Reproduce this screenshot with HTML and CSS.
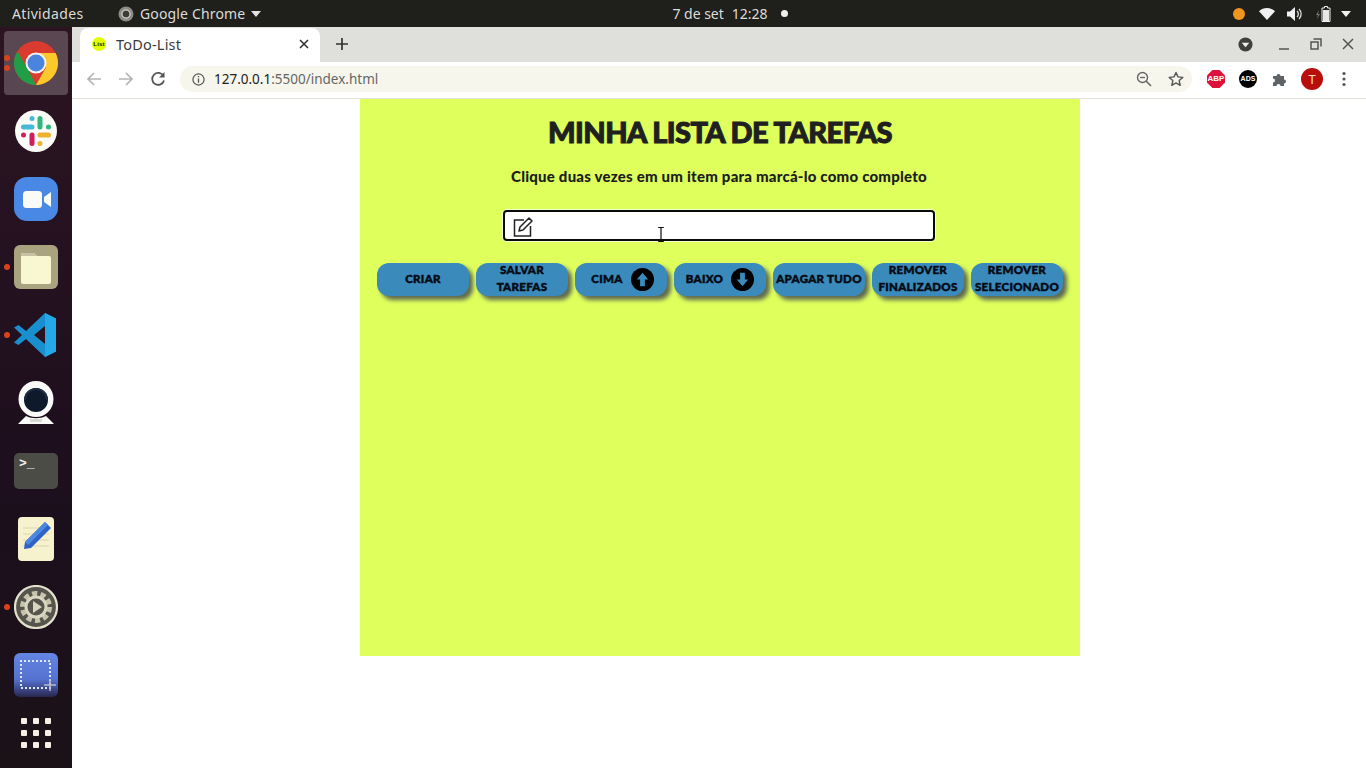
FILE: index.html
```html
<!DOCTYPE html>
<html lang="pt-BR">
<head>
<meta charset="utf-8">
<title>ToDo-List</title>
<link rel="stylesheet" href="styles.css">
</head>
<body>
<header class="topbar">
  <div class="top-left">
    <span class="top-activities">Atividades</span>
    <span class="top-app">
      <svg class="top-app-icon" viewBox="0 0 16 16"><circle cx="8" cy="8" r="7.5" fill="#8c8c86"/><circle cx="8" cy="8" r="3.2" fill="#3b3b39"/><circle cx="8" cy="8" r="4.2" fill="none" stroke="#d8d8d2" stroke-width="1"/></svg>
      Google Chrome
      <svg class="caret" viewBox="0 0 10 6"><path d="M0 0h10L5 6z" fill="#e2e2e2"/></svg>
    </span>
  </div>
  <div class="top-center">
    <span>7 de set</span><span>12:28</span><i class="clock-dot"></i>
  </div>
  <div class="top-right">
    <i class="tray-orange"></i>
    <svg class="tray-wifi" viewBox="0 0 16 12"><path d="M0 3.2C4.4-1 11.600-1 16 3.200L8 12z" fill="#f2f2f2"/></svg>
    <svg class="tray-vol" viewBox="0 0 16 14"><path d="M0 4.500h3L8 0v14L3 9.500H0z" fill="#f2f2f2"/><path d="M10 4a4 4 0 0 1 0 6M12 2a7 7 0 0 1 0 10" fill="none" stroke="#e0e0e0" stroke-width="1.300"/></svg>
    <svg class="tray-bat" viewBox="0 0 16 16"><path d="M3 4L0 9h2l-1 4 3-5H2z" fill="#777"/><path d="M6 2h2.500V.5h3V2H14v13.500H6z" fill="none" stroke="#f2f2f2" stroke-width="1"/><rect x="7" y="4" width="6" height="11" fill="#e8e8e8"/></svg>
    <svg class="caret" viewBox="0 0 10 6"><path d="M0 0h10L5 6z" fill="#f2f2f2"/></svg>
  </div>
</header>

<div class="desktop">
  <nav class="dock">
    <div class="dock-item active">
      <i class="run-dot d1"></i><i class="run-dot d2"></i>
      <svg class="dock-icon" viewBox="0 0 44 44">
        <circle cx="22" cy="22" r="22" fill="#db3a2e"/>
        <path d="M3.500 10.500L14 28.500 22 44C10 44 0 34 0 22c0-4 1.300-8.200 3.500-11.500z" fill="#1f9e46"/>
        <path d="M22 12h19.500c1.600 3 2.500 6.500 2.500 10 0 12-10 22-22 22l10-17.500z" fill="#fbc92b"/>
        <circle cx="22" cy="22" r="10.500" fill="#f3f3f3"/><circle cx="22" cy="22" r="8.500" fill="#4a84de"/>
      </svg>
    </div>
    <div class="dock-item">
      <svg class="dock-icon" viewBox="0 0 44 44">
        <circle cx="22" cy="22" r="21" fill="#fbfbf7"/>
        <g stroke-width="5" stroke-linecap="round" fill="none">
          <path d="M18 9.500v0M9.500 18H18" stroke="#46b8d8"/><path d="M26 9.500V18M34.500 18v0" stroke="#2eb67d"/>
          <path d="M34.500 26H26M26 34.500v0" stroke="#ecb22e"/><path d="M18 26v8.500M9.500 26v0" stroke="#d01e5d"/>
        </g>
      </svg>
    </div>
    <div class="dock-item">
      <svg class="dock-icon" viewBox="0 0 44 44">
        <rect x="0" y="0" width="44" height="44" rx="13" fill="#4a88e6"/>
        <rect x="9" y="14" width="19" height="17" rx="3.500" fill="#fafaf6"/>
        <path d="M30 20l7-5v15l-7-5z" fill="#fafaf6"/>
      </svg>
    </div>
    <div class="dock-item">
      <i class="run-dot d0"></i>
      <svg class="dock-icon" viewBox="0 0 44 44">
        <rect x="0" y="0" width="44" height="44" rx="6" fill="#a9a37f"/>
        <path d="M7 10a2 2 0 0 1 2-2h11l3 3h12a2 2 0 0 1 2 2v24a2 2 0 0 1-2 2H9a2 2 0 0 1-2-2z" fill="#f9f6d2"/>
        <path d="M7 10a2 2 0 0 1 2-2h11l3 3H7z" fill="#c6c1a4"/>
      </svg>
    </div>
    <div class="dock-item">
      <i class="run-dot d0"></i>
      <svg class="dock-icon" viewBox="0 0 44 44">
        <path d="M31 0l11 5.500v33L31 44 12 26l-7.500 6L0 29.500 8 22 0 14.500 4.500 12l7.500 6z" fill="#1a8fcf"/>
        <path d="M31 0l11 5.500v33L31 44V31L20 22l11-9z" fill="#24a8e6"/>
        <path d="M31 13v18l-11-9z" fill="#2b1320"/>
      </svg>
    </div>
    <div class="dock-item">
      <svg class="dock-icon" viewBox="0 0 44 44">
        <ellipse cx="22" cy="18" rx="17.500" ry="18" fill="#fafaf8"/>
        <circle cx="22" cy="19" r="12" fill="#0e1a2c"/>
        <path d="M11 19a11 11 0 0 1 22 0" fill="none" stroke="#1c2c3e" stroke-width="2"/>
        <path d="M4 43l8-8c6 3 14 3 20 0l8 8z" fill="#fafaf8"/>
        <path d="M16 38h12v3H16z" fill="#d8d8d4"/>
      </svg>
    </div>
    <div class="dock-item">
      <div class="terminal"><span>&gt;_</span></div>
    </div>
    <div class="dock-item">
      <svg class="dock-icon" viewBox="0 0 44 44">
        <rect x="4" y="0" width="36" height="44" rx="4" fill="#f6f2ce"/>
        <path d="M9 11h26M9 17h26M9 23h26M9 29h26" stroke="#dcd6ac" stroke-width="1"/>
        <path d="M31 5l6 6-20 20-7 1 1-7z" fill="#2f62c4"/>
        <path d="M31 5l3 3-20 20-3-3z" fill="#4b88e0"/>
      </svg>
    </div>
    <div class="dock-item">
      <i class="run-dot d0"></i>
      <svg class="dock-icon" viewBox="0 0 44 44">
        <circle cx="22" cy="22" r="21" fill="#55554d" stroke="#e4e2cc" stroke-width="2.200"/>
        <circle cx="22" cy="22" r="13" fill="none" stroke="#c6c4ac" stroke-width="6" stroke-dasharray="5 3.160"/>
        <circle cx="22" cy="22" r="10" fill="none" stroke="#d8d6c0" stroke-width="3"/>
        <path d="M19 16l9 6-9 6z" fill="#d8d6c0"/>
      </svg>
    </div>
    <div class="dock-item">
      <svg class="dock-icon" viewBox="0 0 44 44">
        <defs><linearGradient id="shot-bg" x1="0" y1="0" x2="0" y2="1"><stop offset="0" stop-color="#6486e2"/><stop offset=".6" stop-color="#5672d0"/><stop offset="1" stop-color="#28264e"/></linearGradient></defs>
        <rect width="44" height="44" rx="6" fill="url(#shot-bg)"/>
        <path d="M7 33V8h29v27H7" fill="none" stroke="#dfe6fa" stroke-width="2" stroke-dasharray="2 2"/>
        <path d="M36 26v12M30 32h12" stroke="#b8bcc8" stroke-width="1.500"/>
      </svg>
    </div>
    <div class="dock-item apps">
      <div class="apps-grid"><i></i><i></i><i></i><i></i><i></i><i></i><i></i><i></i><i></i></div>
    </div>
  </nav>

  <div class="browser">
    <div class="tabstrip">
      <div class="tab">
        <span class="favicon">List</span>
        <span class="tab-title">ToDo-List</span>
        <svg class="tab-close" viewBox="0 0 10 10"><path d="M1 1l8 8M9 1l-8 8" stroke="#333" stroke-width="1.600"/></svg>
      </div>
      <svg class="new-tab" viewBox="0 0 12 12"><path d="M6 0v12M0 6h12" stroke="#333" stroke-width="1.700"/></svg>
      <div class="win-controls">
        <svg class="win-menu" viewBox="0 0 16 16"><circle cx="8" cy="8" r="7.500" fill="#3f3f3b"/><path d="M4 6h8l-4 5z" fill="#eee"/></svg>
        <svg class="win-btn" viewBox="0 0 12 12"><path d="M1 11h10" stroke="#555" stroke-width="1.500"/></svg>
        <svg class="win-btn" viewBox="0 0 12 12"><path d="M3.500 1h7.500v7.500M1 4h7v7H1z" fill="none" stroke="#555" stroke-width="1.500"/></svg>
        <svg class="win-btn" viewBox="0 0 12 12"><path d="M1 1l10 10M11 1L1 11" stroke="#555" stroke-width="1.500"/></svg>
      </div>
    </div>

    <div class="toolbar">
      <svg class="tool-icon" viewBox="0 0 16 16"><path d="M15 8H2M8 2L2 8l6 6" fill="none" stroke="#b4b4b4" stroke-width="1.700"/></svg>
      <svg class="tool-icon" viewBox="0 0 16 16"><path d="M1 8h13M8 2l6 6-6 6" fill="none" stroke="#b4b4b4" stroke-width="1.700"/></svg>
      <svg class="tool-icon" viewBox="0 0 16 16"><path d="M13.500 5A6 6 0 1 0 14 9.500" fill="none" stroke="#555" stroke-width="1.800"/><path d="M14.500 1v5.500H9z" fill="#555"/></svg>
      <div class="omnibox">
        <svg class="info" viewBox="0 0 14 14"><circle cx="7" cy="7" r="6" fill="none" stroke="#555" stroke-width="1.300"/><path d="M7 6v4.500M7 3.300v1.400" stroke="#555" stroke-width="1.400"/></svg>
        <span class="url"><b>127.0.0.1</b>:5500/index.html</span>
        <svg class="omni-icon zoom-out" viewBox="0 0 16 16"><circle cx="6.500" cy="6.500" r="5" fill="none" stroke="#666" stroke-width="1.400"/><path d="M10 10l5 5" stroke="#666" stroke-width="1.600"/><path d="M4 6.500h5" stroke="#666" stroke-width="1.300"/></svg>
        <svg class="omni-icon" viewBox="0 0 16 16"><path d="M8 1.500l2 4.400 4.800.5-3.600 3.200 1 4.700L8 11.900l-4.200 2.400 1-4.700L1.200 6.400 6 5.900z" fill="none" stroke="#555" stroke-width="1.400" stroke-linejoin="round"/></svg>
      </div>
      <div class="extensions">
        <span class="ext abp">ABP</span>
        <span class="ext ads">ADS</span>
        <svg class="ext-puzzle" viewBox="0 0 16 16"><path d="M1 5h3.500a2 2 0 1 1 4 0H12v3.500a2 2 0 1 1 0 4V15H8.500a2 2 0 1 0-4 0H1v-3.500a2 2 0 1 0 0-4z" fill="#5f6368"/></svg>
        <span class="avatar">T</span>
        <svg class="kebab" viewBox="0 0 4 16"><circle cx="2" cy="2.500" r="1.600" fill="#555"/><circle cx="2" cy="8" r="1.600" fill="#555"/><circle cx="2" cy="13.500" r="1.600" fill="#555"/></svg>
      </div>
    </div>

    <main class="page">
      <section class="card">
        <h1 class="title">MINHA LISTA DE TAREFAS</h1>
        <p class="subtitle">Clique duas vezes em um item para marcá-lo como completo</p>
        <div class="field">
          <svg class="field-icon" viewBox="0 0 20 20"><path d="M11 3H1.500v16h16V9" fill="none" stroke="#222" stroke-width="1.500"/><path d="M16 1l3 3-9 9-4 1 1-4z" fill="#fff" stroke="#222" stroke-width="1.500" stroke-linejoin="round"/></svg>
          <input class="field-input" type="text" aria-label="Nova tarefa">
          <svg class="ibeam" viewBox="0 0 8 16"><path d="M1 .5h6M1 15.500h6M4 .5v15" stroke="#111" stroke-width="1.300"/></svg>
        </div>
        <div class="actions">
          <button class="btn">CRIAR</button>
          <button class="btn">SALVAR TAREFAS</button>
          <button class="btn btn-up">CIMA
            <svg class="btn-arrow" viewBox="0 0 24 24"><circle cx="12" cy="12" r="12" fill="#000"/><path d="M12 5l6 7h-3.500v7h-5v-7H6z" fill="#3a8abc"/></svg>
          </button>
          <button class="btn">BAIXO
            <svg class="btn-arrow" viewBox="0 0 24 24"><circle cx="12" cy="12" r="12" fill="#000"/><path d="M12 19l6-7h-3.500V5h-5v7H6z" fill="#3a8abc"/></svg>
          </button>
          <button class="btn">APAGAR TUDO</button>
          <button class="btn">REMOVER FINALIZADOS</button>
          <button class="btn">REMOVER SELECIONADO</button>
        </div>
      </section>
    </main>
  </div>
</div>
</body>
</html>
```
FILE: styles.css
```css
* { box-sizing: border-box; }
html, body { margin: 0; height: 768px; overflow: hidden; }
body { font-family: "Noto Sans", sans-serif; background: #fff; display: flex; flex-direction: column; }

/* GNOME top bar */
.topbar {
  height: 27px; flex: none; background: #1f1f1c; color: #dcdcd8;
  font-size: 14px; display: grid; grid-template-columns: 1fr auto 1fr; align-items: center;
}
.top-left { display: flex; align-items: center; padding-left: 12px; }
.top-activities { width: 106px; letter-spacing: .35px; }
.top-app { display: flex; align-items: center; letter-spacing: .15px; }
.top-app-icon { width: 16px; height: 16px; margin-right: 6px; }
.caret { width: 10px; height: 6px; margin-left: 6px; }
.top-center { display: flex; align-items: center; gap: 8px; margin-left: 94px; }
.clock-dot { width: 7px; height: 7px; border-radius: 50%; background: #eee; margin-left: 5px; }
.top-right { display: flex; align-items: center; justify-content: flex-end; padding-right: 15px; }
.tray-orange { width: 12px; height: 12px; border-radius: 50%; background: #f0961e; margin-right: 14px; }
.tray-wifi { width: 16px; height: 12px; margin-right: 12px; }
.tray-vol { width: 16px; height: 14px; margin-right: 13px; }
.tray-bat { width: 16px; height: 16px; margin-right: 9px; }
.top-right .caret { margin-left: 0; }

.desktop { flex: 1; display: flex; min-height: 0; }

/* Ubuntu dock */
.dock {
  width: 72px; flex: none; padding-top: 2px;
  background: linear-gradient(#2c1421, #1d0f1e 60%, #1b1218);
  display: flex; flex-direction: column; align-items: center;
}
.dock-item { position: relative; width: 72px; height: 68px; flex: none; display: flex; align-items: center; justify-content: center; }
.dock-item.apps { height: 48px; }
.dock-item.active::before {
  content: ""; position: absolute; left: 4px; top: 2px; width: 64px; height: 64px;
  background: rgba(255,255,255,.22); border-radius: 4px;
}
.dock-icon { position: relative; width: 44px; height: 44px; }
.run-dot { position: absolute; left: 4px; width: 6px; height: 6px; border-radius: 50%; background: #d9431c; z-index: 1; }
.run-dot.d0 { top: 31px; }
.run-dot.d1 { top: 26px; }
.run-dot.d2 { top: 36px; }
.terminal {
  width: 44px; height: 36px; border-radius: 5px; background: #4c4c47;
  color: #f2f2f2; font: 700 13px/1 "Liberation Mono", monospace; padding: 4px 0 0 5px;
}
.apps-grid { display: grid; grid-template-columns: repeat(3, 6px); gap: 6px; }
.apps-grid i { height: 6px; border-radius: 1px; background: #f6efe6; }

/* Chrome window */
.browser { flex: 1; min-width: 0; display: flex; flex-direction: column; }
.tabstrip { height: 35px; flex: none; background: #dfdfdc; display: flex; align-items: flex-end; padding-left: 8px; }
.tab {
  width: 240px; height: 34px; background: #fff; border-radius: 8px 8px 0 0;
  display: flex; align-items: center; padding: 0 11px 2px 13px; color: #3a3a3a; font-size: 14.500px; letter-spacing: .2px;
}
.favicon {
  width: 14px; height: 14px; border-radius: 50%; background: #e4ff00; color: #111;
  font: 700 6px/14px "Liberation Sans", sans-serif; text-align: center; margin-left: -1px; margin-right: 10px; flex: none;
}
.tab-title { flex: 1; }
.tab-close { width: 10px; height: 10px; }
.new-tab { width: 12px; height: 12px; margin: 0 0 12px 16px; }
.win-controls { margin-left: auto; display: flex; align-items: center; height: 34px; padding: 0 12px 2px 0; }
.win-menu { width: 15px; height: 15px; margin-right: 25px; }
.win-btn { width: 12px; height: 12px; margin-left: 20px; }
.win-menu + .win-btn { margin-left: 0; }

.toolbar {
  height: 37px; flex: none; background: #fff; border-bottom: 1px solid #e2e2da;
  display: flex; align-items: center; padding: 0 0 2px 14px;
}
.tool-icon { width: 16px; height: 16px; margin-right: 16px; }
.omnibox {
  width: 1012px; height: 26px; margin-left: -2px; border-radius: 13px; background: #f6f6ec;
  display: flex; align-items: center; padding: 0 8px 0 12px;
}
.info { width: 13px; height: 13px; margin-right: 9px; }
.url { flex: 1; font-size: 13.500px; color: #666; }
.url b { font-weight: 400; color: #222; }
.omni-icon { width: 16px; height: 16px; }
.zoom-out { margin-right: 16px; }
.extensions { display: flex; align-items: center; margin-left: 15px; }
.ext {
  width: 18px; height: 18px; color: #fff; text-align: center;
  font: 700 8px/18px "Liberation Sans", sans-serif;
}
.abp { background: #e0103c; margin-right: 14px; clip-path: polygon(30% 0, 70% 0, 100% 30%, 100% 70%, 70% 100%, 30% 100%, 0 70%, 0 30%); }
.ads { background: #000; border-radius: 50%; margin-right: 15px; font-size: 7px; }
.ext-puzzle { width: 16px; height: 16px; margin-right: 13px; }
.avatar { width: 22px; height: 22px; border-radius: 50%; background: #b80f0a; color: #f4d9c8; font-size: 13px; line-height: 22px; text-align: center; margin-right: 19px; }
.kebab { width: 4px; height: 16px; }

/* Page */
.page { flex: 1; background: #fff; display: flex; justify-content: center; padding-left: 2px; }
.card {
  width: 720px; height: 557px; background: #deff5c;
  display: flex; flex-direction: column; align-items: center; padding-top: 15px;
}
.title {
  margin: 0; font: 900 29px/36px Lato, sans-serif; color: #202020;
  -webkit-text-stroke: 1px #202020; letter-spacing: -.55px;
}
.subtitle { margin: 16px 2px 0 0; font: 900 15px/20px Lato, sans-serif; color: #1c1c1c; letter-spacing: .22px; }
.field { position: relative; width: 432px; height: 31px; margin: 24px 2px 0 0; box-shadow: 0 0 0 1px #f4ffd0; border-radius: 4px; }
.field-input { display: block; width: 100%; height: 100%; border: 2px solid #0a0a0a; border-radius: 4px; background: #fff; padding: 0 0 0 36px; }
.field-icon { position: absolute; left: 10px; top: 7px; width: 20px; height: 20px; }
.ibeam { position: absolute; left: 154px; top: 17px; width: 8px; height: 15px; }
.actions { display: flex; gap: 7px; margin-top: 22px; }
.btn {
  width: 92px; height: 33px; padding: 0 0 3px; border: 0; border-radius: 12px;
  background: #3a8abc; color: #050a14; box-shadow: 4px 4px 4px #5f6a50;
  font: 900 11.500px/17px Lato, sans-serif; -webkit-text-stroke: .5px #050a14; letter-spacing: .3px;
  display: flex; align-items: center; justify-content: center; text-align: center;
}
.btn-up { padding-left: 3px; }
.btn-arrow { width: 23px; height: 23px; margin: 3px 0 0 8px; flex: none; }
```
